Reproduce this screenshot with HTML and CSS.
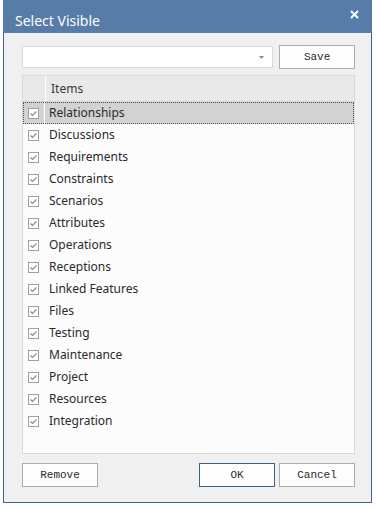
FILE: index.html
```html
<!DOCTYPE html>
<html>
<head>
<meta charset="utf-8">
<link rel="stylesheet" href="styles.css">
</head>
<body>
<div class="window">
  <div class="titlebar">
    <span class="title">Select Visible</span>
    <svg class="close" width="9" height="9" viewBox="0 0 9 9"><path d="M1 1L8 8M8 1L1 8" stroke="#fff" stroke-width="2"/></svg>
  </div>
  <div class="content">
    <div class="toprow">
      <div class="combo">
        <svg class="arrow" width="5" height="3" viewBox="0 0 5 3"><path d="M0 0H5L2.5 3Z" fill="#8a8a8a"/></svg>
      </div>
      <button class="btn">Save</button>
    </div>
    <div class="list">
      <div class="header">
        <div class="hcheck"></div>
        <div class="htext">Items</div>
      </div>
      <div class="row selected"><span class="cell-check"><span class="cb"><svg width="9" height="9" viewBox="0 0 9 9"><path d="M1.5 4.5L3.5 6.5L7.5 2.5" stroke="#8c8c8c" stroke-width="1.2" fill="none"/></svg></span></span><span class="label">Relationships</span></div>
      <div class="row"><span class="cell-check"><span class="cb"><svg width="9" height="9" viewBox="0 0 9 9"><path d="M1.5 4.5L3.5 6.5L7.5 2.5" stroke="#8c8c8c" stroke-width="1.2" fill="none"/></svg></span></span><span class="label">Discussions</span></div>
      <div class="row"><span class="cell-check"><span class="cb"><svg width="9" height="9" viewBox="0 0 9 9"><path d="M1.5 4.5L3.5 6.5L7.5 2.5" stroke="#8c8c8c" stroke-width="1.2" fill="none"/></svg></span></span><span class="label">Requirements</span></div>
      <div class="row"><span class="cell-check"><span class="cb"><svg width="9" height="9" viewBox="0 0 9 9"><path d="M1.5 4.5L3.5 6.5L7.5 2.5" stroke="#8c8c8c" stroke-width="1.2" fill="none"/></svg></span></span><span class="label">Constraints</span></div>
      <div class="row"><span class="cell-check"><span class="cb"><svg width="9" height="9" viewBox="0 0 9 9"><path d="M1.5 4.5L3.5 6.5L7.5 2.5" stroke="#8c8c8c" stroke-width="1.2" fill="none"/></svg></span></span><span class="label">Scenarios</span></div>
      <div class="row"><span class="cell-check"><span class="cb"><svg width="9" height="9" viewBox="0 0 9 9"><path d="M1.5 4.5L3.5 6.5L7.5 2.5" stroke="#8c8c8c" stroke-width="1.2" fill="none"/></svg></span></span><span class="label">Attributes</span></div>
      <div class="row"><span class="cell-check"><span class="cb"><svg width="9" height="9" viewBox="0 0 9 9"><path d="M1.5 4.5L3.5 6.5L7.5 2.5" stroke="#8c8c8c" stroke-width="1.2" fill="none"/></svg></span></span><span class="label">Operations</span></div>
      <div class="row"><span class="cell-check"><span class="cb"><svg width="9" height="9" viewBox="0 0 9 9"><path d="M1.5 4.5L3.5 6.5L7.5 2.5" stroke="#8c8c8c" stroke-width="1.2" fill="none"/></svg></span></span><span class="label">Receptions</span></div>
      <div class="row"><span class="cell-check"><span class="cb"><svg width="9" height="9" viewBox="0 0 9 9"><path d="M1.5 4.5L3.5 6.5L7.5 2.5" stroke="#8c8c8c" stroke-width="1.2" fill="none"/></svg></span></span><span class="label">Linked Features</span></div>
      <div class="row"><span class="cell-check"><span class="cb"><svg width="9" height="9" viewBox="0 0 9 9"><path d="M1.5 4.5L3.5 6.5L7.5 2.5" stroke="#8c8c8c" stroke-width="1.2" fill="none"/></svg></span></span><span class="label">Files</span></div>
      <div class="row"><span class="cell-check"><span class="cb"><svg width="9" height="9" viewBox="0 0 9 9"><path d="M1.5 4.5L3.5 6.5L7.5 2.5" stroke="#8c8c8c" stroke-width="1.2" fill="none"/></svg></span></span><span class="label">Testing</span></div>
      <div class="row"><span class="cell-check"><span class="cb"><svg width="9" height="9" viewBox="0 0 9 9"><path d="M1.5 4.5L3.5 6.5L7.5 2.5" stroke="#8c8c8c" stroke-width="1.2" fill="none"/></svg></span></span><span class="label">Maintenance</span></div>
      <div class="row"><span class="cell-check"><span class="cb"><svg width="9" height="9" viewBox="0 0 9 9"><path d="M1.5 4.5L3.5 6.5L7.5 2.5" stroke="#8c8c8c" stroke-width="1.2" fill="none"/></svg></span></span><span class="label">Project</span></div>
      <div class="row"><span class="cell-check"><span class="cb"><svg width="9" height="9" viewBox="0 0 9 9"><path d="M1.5 4.5L3.5 6.5L7.5 2.5" stroke="#8c8c8c" stroke-width="1.2" fill="none"/></svg></span></span><span class="label">Resources</span></div>
      <div class="row"><span class="cell-check"><span class="cb"><svg width="9" height="9" viewBox="0 0 9 9"><path d="M1.5 4.5L3.5 6.5L7.5 2.5" stroke="#8c8c8c" stroke-width="1.2" fill="none"/></svg></span></span><span class="label">Integration</span></div>
    </div>
    <div class="bottomrow">
      <button class="btn">Remove</button>
      <div class="spacer"></div>
      <button class="btn primary">OK</button>
      <button class="btn">Cancel</button>
    </div>
  </div>
</div>
</body>
</html>
```
FILE: styles.css
```css
html, body {
  margin: 0;
  padding: 0;
  background: #ffffff;
}
.window {
  margin-left: 3px;
  width: 367px;
  height: 502px;
  border: 1px solid #40628c;
  border-top: none;
  background: #f0f0f0;
  display: flex;
  flex-direction: column;
}
.titlebar {
  height: 33px;
  background: #577ca7;
  display: flex;
  align-items: flex-start;
  justify-content: space-between;
  margin: 0 -1px;
  padding-left: 12px;
  padding-right: 13px;
  box-sizing: border-box;
}
.title {
  color: #ffffff;
  font-family: "Noto Sans", sans-serif;
  font-size: 14px;
  line-height: 19px;
  margin-top: 11px;
}
.close {
  margin-top: 10px;
}
.content {
  padding: 12px 16px 0 18px;
  display: flex;
  flex-direction: column;
}
.toprow {
  display: flex;
  align-items: center;
  gap: 6px;
  height: 24px;
}
.combo {
  width: 250px;
  height: 20px;
  background: #ffffff;
  border: 1px solid #dadada;
  position: relative;
}
.arrow {
  position: absolute;
  right: 8px;
  top: 9px;
}
.btn {
  width: 76px;
  height: 24px;
  border: 1px solid #adadad;
  background: #fdfdfd;
  font-family: "Liberation Mono", monospace;
  font-size: 11px;
  color: #2a2a2a;
  padding: 0;
  box-sizing: border-box;
}
.btn.primary {
  border-color: #3d5f8a;
}
.list {
  margin-top: 6px;
  width: 333px;
  height: 379px;
  box-sizing: border-box;
  border: 1px solid #d9d9d9;
  background: #fcfcfc;
  font-family: "Noto Sans", sans-serif;
  font-size: 12px;
  color: #2a2a2a;
}
.header {
  display: flex;
  height: 26px;
  box-sizing: border-box;
  background: #e9e9e9;
  border-bottom: 1px solid #d4d4d4;
}
.hcheck {
  width: 22px;
  border-right: 1px solid #ffffff;
}
.htext {
  padding-left: 5px;
  line-height: 25px;
  color: #3a3a3a;
}
.row {
  display: flex;
  height: 22px;
  align-items: center;
  box-sizing: border-box;
}
.row.selected {
  background: #d2d2d2;
  outline: 1px dotted #555;
  outline-offset: -1px;
}
.cell-check {
  width: 22px;
  height: 100%;
  display: flex;
  align-items: center;
  padding-left: 5px;
  box-sizing: border-box;
}
.row.selected .cell-check {
  border-right: 1px solid #ffffff;
}
.cb {
  width: 9px;
  height: 9px;
  border: 1px solid #a0a0a0;
  background: #ffffff;
  display: flex;
}
.label {
  padding-left: 4px;
  line-height: 16px;
}
.bottomrow {
  display: flex;
  margin-top: 9px;
  gap: 4px;
}
.spacer {
  flex: 1;
}
```
